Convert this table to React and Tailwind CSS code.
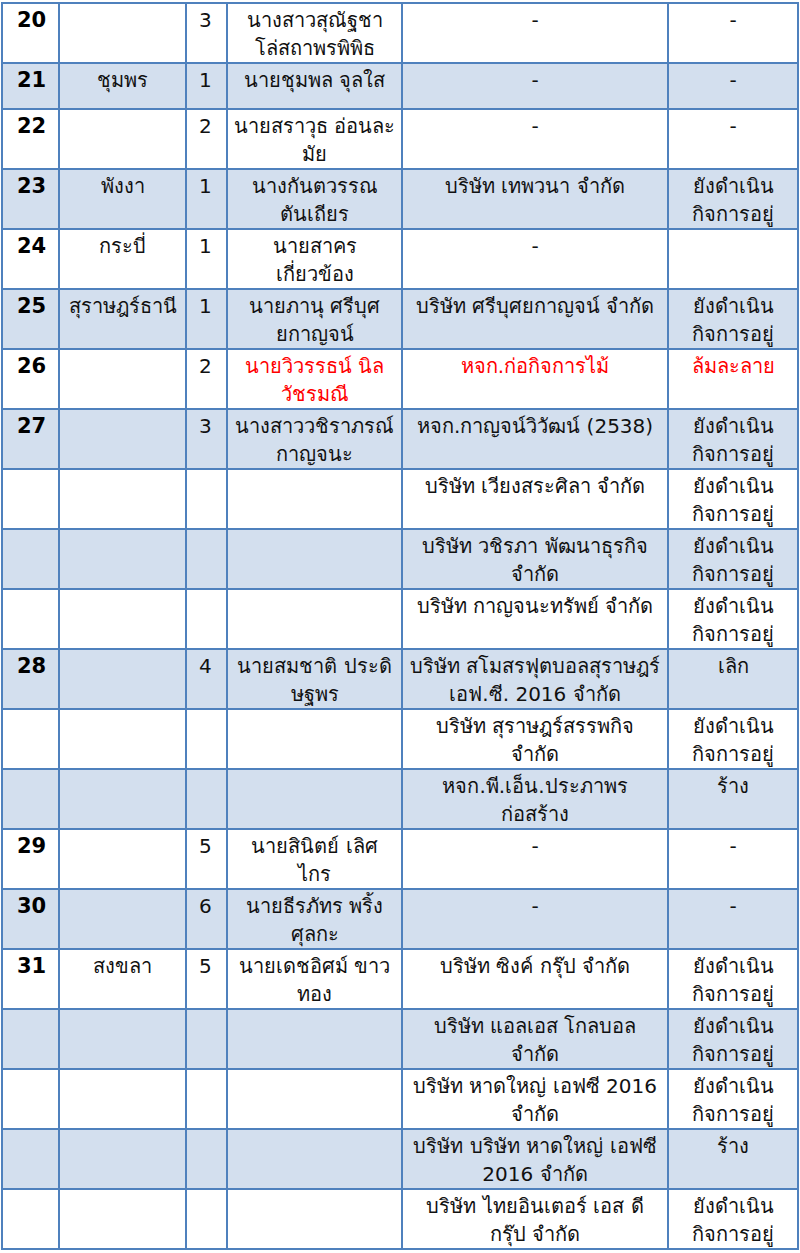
const rows = [
  { no: "20", prov: "", seq: "3", name: "นางสาวสุณัฐชา\nโล่สถาพรพิพิธ", co: "-", st: "-", h: "h-[56px]" },
  { no: "21", prov: "ชุมพร", seq: "1", name: "นายชุมพล จุลใส", co: "-", st: "-", h: "h-[46px]" },
  { no: "22", prov: "", seq: "2", name: "นายสราวุธ อ่อนละ\nมัย", co: "-", st: "-" },
  { no: "23", prov: "พังงา", seq: "1", name: "นางกันตวรรณ\nตันเถียร", co: "บริษัท เทพวนา จำกัด", st: "ยังดำเนิน\nกิจการอยู่" },
  { no: "24", prov: "กระบี่", seq: "1", name: "นายสาคร\nเกี่ยวข้อง", co: "-", st: "" },
  { no: "25", prov: "สุราษฎร์ธานี", seq: "1", name: "นายภานุ ศรีบุศ\nยกาญจน์", co: "บริษัท ศรีบุศยกาญจน์ จำกัด", st: "ยังดำเนิน\nกิจการอยู่" },
  { no: "26", prov: "", seq: "2", name: "นายวิวรรธน์ นิล\nวัชรมณี", co: "หจก.ก่อกิจการไม้", st: "ล้มละลาย", red: true },
  { no: "27", prov: "", seq: "3", name: "นางสาววชิราภรณ์\nกาญจนะ", co: "หจก.กาญจน์วิวัฒน์ (2538)", st: "ยังดำเนิน\nกิจการอยู่" },
  { co: "บริษัท เวียงสระศิลา จำกัด", st: "ยังดำเนิน\nกิจการอยู่" },
  { co: "บริษัท วชิรภา พัฒนาธุรกิจ\nจำกัด", st: "ยังดำเนิน\nกิจการอยู่" },
  { co: "บริษัท กาญจนะทรัพย์ จำกัด", st: "ยังดำเนิน\nกิจการอยู่" },
  { no: "28", prov: "", seq: "4", name: "นายสมชาติ ประดิ\nษฐพร", co: "บริษัท สโมสรฟุตบอลสุราษฎร์\nเอฟ.ซี. 2016 จำกัด", st: "เลิก" },
  { co: "บริษัท สุราษฎร์สรรพกิจ\nจำกัด", st: "ยังดำเนิน\nกิจการอยู่" },
  { co: "หจก.พี.เอ็น.ประภาพร\nก่อสร้าง", st: "ร้าง" },
  { no: "29", prov: "", seq: "5", name: "นายสินิตย์ เลิศ\nไกร", co: "-", st: "-" },
  { no: "30", prov: "", seq: "6", name: "นายธีรภัทร พริ้ง\nศุลกะ", co: "-", st: "-" },
  { no: "31", prov: "สงขลา", seq: "5", name: "นายเดชอิศม์ ขาว\nทอง", co: "บริษัท ซิงค์ กรุ๊ป จำกัด", st: "ยังดำเนิน\nกิจการอยู่" },
  { co: "บริษัท แอลเอส โกลบอล\nจำกัด", st: "ยังดำเนิน\nกิจการอยู่" },
  { co: "บริษัท หาดใหญ่ เอฟซี 2016\nจำกัด", st: "ยังดำเนิน\nกิจการอยู่" },
  { co: "บริษัท บริษัท หาดใหญ่ เอฟซี\n2016 จำกัด", st: "ร้าง" },
  { co: "บริษัท ไทยอินเตอร์ เอส ดี\nกรุ๊ป จำกัด", st: "ยังดำเนิน\nกิจการอยู่" },
];

const cell = "border-2 border-[#4f81bd] align-top pt-[2px] leading-[28px] whitespace-pre-line";

export default function App() {
  return (
    <div className="bg-white pl-px pt-[2px]" style={{ fontFamily: '"DejaVu Sans", sans-serif' }}>
      <table className="table-fixed border-collapse w-[796px] text-[20px] text-[#111]">
        <colgroup>
          <col className="w-[57px]" />
          <col className="w-[127px]" />
          <col className="w-[41px]" />
          <col className="w-[175px]" />
          <col className="w-[266px]" />
          <col className="w-[130px]" />
        </colgroup>
        <tbody>
          {rows.map((r, i) => (
            <tr key={i} className={(r.h || "h-[58px]") + (i % 2 ? " bg-[#d3dfee]" : " bg-white")}>
              <td className={cell + " pl-[14px] font-bold text-[21px] text-black"}>{r.no}</td>
              <td className={cell + " text-center"}>{r.prov}</td>
              <td className={cell + " pl-[12px]"}>{r.seq}</td>
              <td className={cell + " text-center px-1" + (r.red ? " text-[#ff0000]" : "")}>{r.name}</td>
              <td className={cell + " text-center px-1" + (r.red ? " text-[#ff0000]" : "")}>{r.co}</td>
              <td className={cell + " text-center px-1" + (r.red ? " text-[#ff0000]" : "")}>{r.st}</td>
            </tr>
          ))}
        </tbody>
      </table>
    </div>
  );
}
